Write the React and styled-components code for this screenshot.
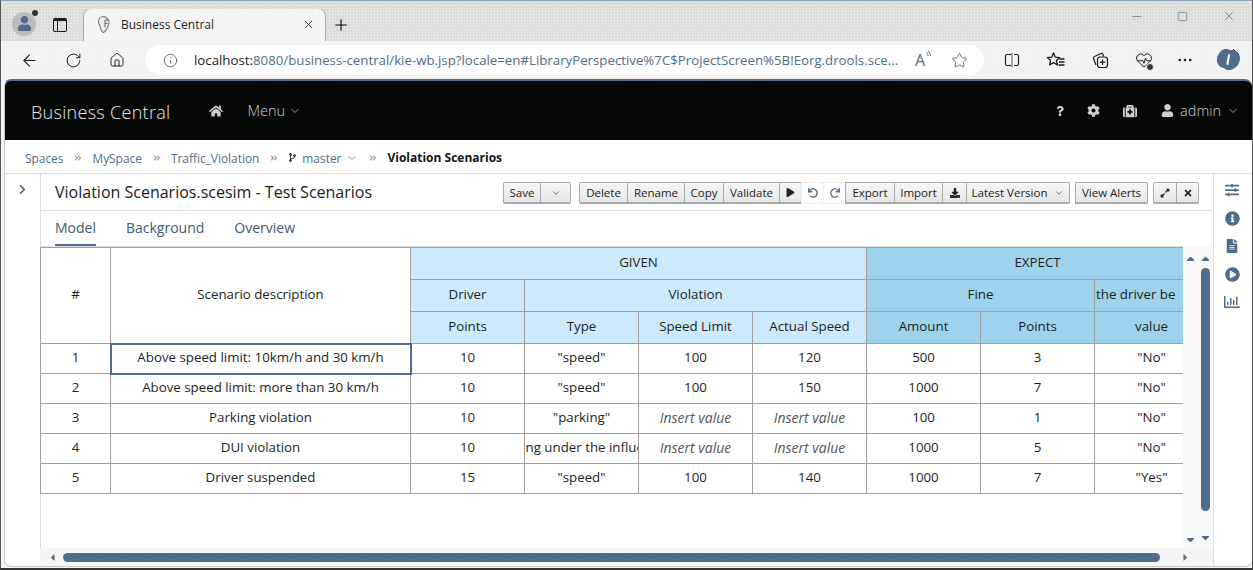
import React from 'react';
import styled, { createGlobalStyle } from 'styled-components';
import { ArrowLeft, RotateCw, Home, Info, Star, Plus, X, Minus, Square, MoreHorizontal, HeartPulse, ChevronDown } from 'lucide-react';
import {
  FaHome, FaQuestion, FaCog, FaMedkit, FaUser, FaChevronRight, FaCodeBranch, FaAngleDoubleRight,
  FaSlidersH, FaInfoCircle, FaFileAlt, FaPlayCircle, FaRegChartBar, FaPlay, FaUndo, FaRedo,
  FaDownload, FaExpandAlt, FaTimes, FaCaretUp, FaCaretDown, FaCaretLeft, FaCaretRight,
} from 'react-icons/fa';

const GlobalStyle = createGlobalStyle`
  html, body { margin: 0; padding: 0; background: #f3f3f3; }
  * { box-sizing: border-box; }
`;

const dither = `radial-gradient(rgba(255,255,255,.55) .6px, transparent .7px)`;

const Frame = styled.div`
  width: 1253px;
  height: 570px;
  overflow: hidden;
  display: flex;
  flex-direction: column;
  font-family: "Open Sans", sans-serif;
  background: #f4f4f4;
  border-top: 1px solid #8fa3b5;
  border-left: 1px solid #555;
  border-right: 1px solid #555;
  border-bottom: 2px solid #333;
`;

const TabStrip = styled.div`
  height: 40px;
  flex: none;
  display: flex;
  align-items: flex-end;
  background-color: #dcdcdb;
  background-image: ${dither};
  background-size: 3px 3px;
`;

const Profile = styled.div`
  width: 24px;
  height: 24px;
  margin-left: 11px;
  margin-right: 5px;
  position: relative;
  display: flex;
  align-items: center;
  justify-content: center;
  color: #4f6d8a;
  align-self: center;
  border-radius: 50%;
  background: #bcbcbc;
  margin-top: 5px;
`;

const ProfileDot = styled.span`
  position: absolute;
  top: -2px;
  right: -2px;
  width: 6px;
  height: 6px;
  border-radius: 50%;
  background: #333;
`;

const TabAction = styled.div`
  width: 34px;
  height: 100%;
  margin-left: 2px;
  margin-right: 7px;
  padding-top: 8px;
  display: flex;
  align-items: center;
  justify-content: center;
`;

const TabsIcon = styled.span`
  width: 14px;
  height: 14px;
  border: 1.5px solid #1c1c1c;
  border-radius: 2px;
  border-top-width: 3px;
  position: relative;
  &::after {
    content: '';
    position: absolute;
    left: 3px;
    top: 0;
    bottom: 0;
    border-left: 1.5px solid #1c1c1c;
  }
`;

const Tab = styled.div`
  width: 241px;
  height: 32px;
  background: #f4f4f4;
  border-radius: 7px 7px 0 0;
  display: flex;
  align-items: center;
  padding: 0 10px 2px 13px;
  font-size: 12px;
  color: #1c1c1c;
  box-shadow: -1px 0 0 #a8a8a8, 1px 0 0 #a8a8a8;
`;

const TabTitle = styled.span`
  flex: 1;
  margin-left: 9px;
`;

const NewTab = styled.div`
  margin-left: 7px;
  height: 100%;
  padding-top: 8px;
  display: flex;
  align-items: center;
`;

const WindowControls = styled.div`
  margin-left: auto;
  height: 100%;
  display: flex;
  align-items: center;
  gap: 34px;
  padding-right: 16px;
  color: #4f6d8a;
  padding-bottom: 10px;
`;

const NavBar = styled.div`
  height: 38px;
  flex: none;
  display: flex;
  align-items: center;
  padding-left: 19px;
  background-color: #f2f2f2;
  background-image: ${dither};
  background-size: 3px 3px;
`;

const NavIcon = styled.div`
  width: ${(p) => p.$w}px;
  flex: none;
  display: flex;
  align-items: center;
  color: #1c1c1c;
`;

const Address = styled.div`
  width: 839px;
  height: 30px;
  border-radius: 15px;
  background: #fff;
  display: flex;
  align-items: center;
  padding: 0 16px 0 18px;
  font-size: 13.25px;
  color: #4f6d8a;
  flex: none;
`;

const Host = styled.span`
  color: #1c1c1c;
`;

const Url = styled.span`
  margin-left: 16px;
  flex: 1;
  white-space: nowrap;
`;

const ReadAloud = styled.span`
  display: flex;
  align-items: flex-start;
  font-size: 16px;
  line-height: 18px;
  margin-right: 20px;
  color: #4f6d8a;
`;

const NavTools = styled.div`
  display: flex;
  align-items: center;
  margin-left: 6px;
  color: #1c1c1c;
`;

const NavTool = styled.div`
  width: ${(p) => p.$w || 44}px;
  display: flex;
  justify-content: center;
  position: relative;
`;

const HealthBadge = styled.span`
  position: absolute;
  right: 12px;
  bottom: -2px;
  width: 8px;
  height: 8px;
  border-radius: 50%;
  background: #333;
  border: 1px solid #f2f2f2;
`;

const Page = styled.div`
  flex: 1;
  min-height: 0;
  margin: 0 0 1px 3px;
  border-top: 2px solid #4f6d8a;
  border-radius: 7px;
  border-left: 1px solid #c9c9c9;
  border-bottom: 1px solid #c9c9c9;
  background: #fff;
  display: flex;
  flex-direction: column;
  overflow: hidden;
`;

const Header = styled.header`
  height: 59px;
  flex: none;
  background: #060808;
  color: #d8d8d8;
  display: flex;
  align-items: center;
  padding: 0 16px 0 26px;
`;

const Brand = styled.div`
  flex: none;
  white-space: nowrap;
  font-size: 18px;
  font-weight: 300;
  color: #e9e9e9;
  letter-spacing: .3px;
  margin-right: 39px;
  padding-top: 3px;
`;

const HeaderItem = styled.div`
  flex: none;
  display: flex;
  align-items: center;
  gap: ${(p) => p.$gap || 4}px;
  font-size: 14.5px;
  font-weight: 300;
  margin-left: ${(p) => p.$ml || 0}px;
  color: #cfcfcf;
`;

const Crumbs = styled.nav`
  height: 34px;
  flex: none;
  display: flex;
  align-items: center;
  padding: 2px 0 0 20px;
  font-size: 11.9px;
  color: #4f6d8a;
  border-bottom: 1px solid #dedede;
`;

const Crumb = styled.span`
  display: flex;
  align-items: center;
  gap: ${(p) => p.$gap || 0}px;
`;

const Sep = styled.span`
  display: flex;
  color: #a3a3a3;
  margin: 0 10px 0 11px;
`;

const Current = styled.span`
  font-weight: 700;
  font-size: 12px;
  color: #141414;
`;

const Main = styled.main`
  flex: 1;
  min-height: 0;
  display: flex;
`;

const LeftRail = styled.aside`
  width: 36px;
  flex: none;
  display: flex;
  justify-content: center;
  padding: 10px 1px 0 0;
  color: #4f6d8a;
  border-right: 1px solid #dedede;
`;

const Center = styled.section`
  width: 1172px;
  flex: none;
  display: flex;
  flex-direction: column;
`;

const TitleBar = styled.div`
  height: 37px;
  flex: none;
  display: flex;
  align-items: center;
  padding-left: 14px;
  border-bottom: 1px solid #dedede;
`;

const Title = styled.h1`
  margin: 0;
  font-size: 16px;
  font-weight: 400;
  color: #1a1a1a;
  flex: 1;
  white-space: nowrap;
`;

const Toolbar = styled.div`
  display: flex;
  align-items: center;
  margin-right: 14px;
  padding-top: 2px;
`;

const BtnGroup = styled.div`
  display: flex;
  margin-left: ${(p) => p.$ml || 0}px;
`;

const Btn = styled.div`
  width: ${(p) => p.$w}px;
  height: 22px;
  display: flex;
  align-items: center;
  justify-content: center;
  font-size: 11.5px;
  white-space: nowrap;
  gap: 7px;
  background: ${(p) => (p.$flat ? '#fff' : 'linear-gradient(#f6f6f6, #e6e6e6)')};
  border: 1px solid ${(p) => (p.$flat ? '#e4e4e4' : '#a9a9a9')};
  border-style: ${(p) => (p.$flat ? 'dotted' : 'solid')};
  border-bottom-width: ${(p) => (p.$flat ? 1 : 2)}px;
  margin-left: -1px;
  color: ${(p) => (p.$flat ? '#4f6d8a' : '#222')};
  &:first-child { border-radius: 2px 0 0 2px; }
  &:last-child { border-radius: 0 2px 2px 0; }
`;

const TabsRow = styled.div`
  height: 35px;
  flex: none;
  display: flex;
  padding-left: 14px;
  gap: 30px;
  font-size: 14px;
  color: #3f5a75;
`;

const TabLink = styled.div`
  height: 35px;
  display: flex;
  align-items: center;
  border-bottom: 2px solid ${(p) => (p.$active ? '#4f6d8a' : 'transparent')};
`;

const Body = styled.div`
  flex: 1;
  min-height: 0;
  margin-left: -1px;
  display: grid;
  grid-template-columns: 1143px 30px;
  grid-template-rows: 1fr 18px;
`;

const TableClip = styled.div`
  overflow: hidden;
  border-top: 1px solid #e4e4e4;
`;

const Table = styled.table`
  table-layout: fixed;
  border-collapse: collapse;
  width: 1168px;
  font-size: 13.3px;
  color: #1e1e1e;
  text-align: center;
`;

const Th = styled.th`
  font-weight: 400;
  height: 32px;
  padding: 0 0 3px;
  border: 1px solid #a49c98;
  background: ${(p) => (p.$kind === 'given' ? '#cde9fd' : p.$kind === 'expect' ? '#9fd2ec' : '#fff')};
`;

const Td = styled.td`
  height: 30px;
  padding: 0 0 3px;
  border: 1px solid #a49c98;
  color: ${(p) => (p.$empty ? '#555' : '#1e1e1e')};
  font-style: ${(p) => (p.$empty ? 'italic' : 'normal')};
  font-size: ${(p) => (p.$empty ? '14px' : 'inherit')};
  outline: ${(p) => (p.$selected ? '2px solid #4f6d8a' : 'none')};
  outline-offset: -1px;
`;

// long values stay centred and lose both ends at the cell edge
const Clip = styled.div`
  display: flex;
  justify-content: ${(p) => (p.$start ? 'flex-start' : 'center')};
  padding-left: ${(p) => (p.$start ? 1 : 0)}px;
  overflow: hidden;
  white-space: nowrap;
`;

const VGutter = styled.div`
  display: flex;
  background-color: #f8f8f8;
  background-image: ${dither};
  background-size: 3px 3px;
`;

const VArrows = styled.div`
  width: 14px;
  display: flex;
  flex-direction: column;
  justify-content: space-between;
  align-items: center;
  color: #4f6d8a;
  padding: 6px 0 2px;
`;

const VTrack = styled.div`
  width: 13px;
  margin-left: 2px;
  display: flex;
  flex-direction: column;
  justify-content: space-between;
  align-items: center;
  color: #4f6d8a;
  padding: 6px 0 4px;
`;

const VThumb = styled.div`
  width: 9px;
  height: 243px;
  margin-top: 3px;
  margin-bottom: auto;
  border-radius: 5px;
  background: #4f6d8a;
`;

const HBar = styled.div`
  grid-column: 1 / 3;
  display: flex;
  align-items: center;
  background-color: #f4f4f4;
  background-image: ${dither};
  background-size: 3px 3px;
  color: #4f6d8a;
  padding-left: 7px;
  height: 18px;
`;

const HThumb = styled.div`
  width: 1097px;
  height: 9px;
  margin-left: 5px;
  border-radius: 5px;
  background: #4f6d8a;
`;

const HEnd = styled.div`
  margin-left: auto;
  margin-right: 22px;
  display: flex;
`;

const RightRail = styled.aside`
  flex: 1;
  border-left: 1px solid #dedede;
  display: flex;
  flex-direction: column;
  align-items: center;
  padding: 2px 2px 0 0;
  color: #4f6d8a;
`;

const RailSlot = styled.div`
  height: 28px;
  display: flex;
  align-items: center;
`;

const columns = [70, 300, 114, 114, 114, 114, 114, 114, 114];

const rows = [
  ['1', 'Above speed limit: 10km/h and 30 km/h', '10', '"speed"', '100', '120', '500', '3', '"No"'],
  ['2', 'Above speed limit: more than 30 km/h', '10', '"speed"', '100', '150', '1000', '7', '"No"'],
  ['3', 'Parking violation', '10', '"parking"', null, null, '100', '1', '"No"'],
  ['4', 'DUI violation', '10', 'Driving under the influence', null, null, '1000', '5', '"No"'],
  ['5', 'Driver suspended', '15', '"speed"', '100', '140', '1000', '7', '"Yes"'],
];

const FavIcon = () => (
  <svg width="20" height="18" viewBox="0 0 20 18" fill="none" stroke="#1c1c1c" strokeWidth="1.3">
    <path d="M7.5 2l1.8 4.2 4.4.4-3.3 3 1 4.4-3.9-2.4-3.9 2.4 1-4.4-3.3-3 4.4-.4z" strokeLinejoin="round" />
    <path d="M13.5 8h5M13 11h5.5M12.5 14h6" />
  </svg>
);

const SplitIcon = () => (
  <svg width="16" height="16" viewBox="0 0 16 16" fill="none" stroke="#1c1c1c" strokeWidth="1.2">
    <path d="M7 2.5H3a1.5 1.5 0 0 0-1.5 1.5v8A1.5 1.5 0 0 0 3 13.5h4M10 2.5h3A1.5 1.5 0 0 1 14.500 4v8a1.500 1.500 0 0 1-1.500 1.500h-3" />
    <path d="M8 1v14" stroke="#4f6d8a" />
  </svg>
);

const CollectionIcon = () => (
  <svg width="18" height="18" viewBox="0 0 18 18" fill="none" stroke="#1c1c1c" strokeWidth="1.2">
    <path d="M5 14L2.500 7.500a1.500 1.500 0 0 1 1-2L10 2.500a1.500 1.500 0 0 1 2 1l.5 2" />
    <rect x="6.500" y="6" width="10" height="10.500" rx="2.500" />
    <path d="M11.500 8.500v5.500M8.800 11.200h5.500" />
  </svg>
);

const CopilotIcon = () => (
  <svg width="25" height="24" viewBox="0 0 25 24">
    <path d="M5 3c3-3 7-2 9-1l3 0c4 0 7 4 7 8 0 5-3 9-7 11-3 2-8 1-9-1-4 0-8-5-7-9 0-3 2-6 4-8z" fill="#4f6d8a" />
    <path d="M13 7l-1.500 9" stroke="#fff" strokeWidth="2" strokeLinecap="round" />
    <path d="M17 1l2 2" stroke="#222" strokeWidth="1" />
  </svg>
);

const BrowserLogo = () => (
  <svg width="15" height="19" viewBox="0 0 15 19" fill="none" stroke="#777" strokeWidth="1.1">
    <path d="M7 1.500c-3 0-5.500 2-5.500 5 0 2 .8 3 1.500 4.500.5 2 1 5.500 3.500 6.500 2-1 3.500-4 5-7 1-2 1.500-7-4.500-9z" fill="#eee" />
    <path d="M8 5v7M8 5h3M8 8.500h2.500" stroke="#4f6d8a" />
  </svg>
);

const SoundArcs = () => (
  <svg width="6" height="9" viewBox="0 0 6 9" fill="none" stroke="#4f6d8a" strokeWidth="1">
    <path d="M1 1c1 1 2 2 2 4M3 0c1.500 1 2.500 3 2.500 5" />
  </svg>
);

const BranchIcon = () => <FaCodeBranch size={9} color="#222" />;

const Caret = ({ size = 12 }) => <ChevronDown size={size} strokeWidth={1.5} />;

const App = () => (
  <>
    <GlobalStyle />
    <Frame>
      <TabStrip>
        <Profile>
          <FaUser size={15} />
          <ProfileDot />
        </Profile>
        <TabAction>
          <TabsIcon />
        </TabAction>
        <Tab>
          <BrowserLogo />
          <TabTitle>Business Central</TabTitle>
          <X size={13} strokeWidth={1.5} />
        </Tab>
        <NewTab>
          <Plus size={18} strokeWidth={1.4} />
        </NewTab>
        <WindowControls>
          <Minus size={13} strokeWidth={1.3} />
          <Square size={11} strokeWidth={1.3} />
          <X size={14} strokeWidth={1.2} />
        </WindowControls>
      </TabStrip>

      <NavBar>
        <NavIcon $w={45}><ArrowLeft size={19} strokeWidth={1.4} /></NavIcon>
        <NavIcon $w={44}><RotateCw size={17} strokeWidth={1.4} /></NavIcon>
        <NavIcon $w={36}><Home size={16} strokeWidth={1.4} /></NavIcon>
        <Address>
          <Info size={15} strokeWidth={1.3} color="#555" />
          <Url>
            <Host>localhost:</Host>8080/business-central/kie-wb.jsp?locale=en#LibraryPerspective%7C$ProjectScreen%5B!Eorg.drools.sce...
          </Url>
          <ReadAloud>A<SoundArcs /></ReadAloud>
          <Star size={17} strokeWidth={1.3} color="#4f6d8a" />
        </Address>
        <NavTools>
          <NavTool><SplitIcon /></NavTool>
          <NavTool><FavIcon /></NavTool>
          <NavTool><CollectionIcon /></NavTool>
          <NavTool><HeartPulse size={18} strokeWidth={1.3} /><HealthBadge /></NavTool>
          <NavTool $w={38}><MoreHorizontal size={18} strokeWidth={1.5} /></NavTool>
          <NavTool $w={48}><CopilotIcon /></NavTool>
        </NavTools>
      </NavBar>

      <Page>
        <Header>
          <Brand>Business Central</Brand>
          <HeaderItem><FaHome size={14} /></HeaderItem>
          <HeaderItem $ml={24}>Menu <Caret /></HeaderItem>
          <HeaderItem $ml={754}><FaQuestion size={10} /></HeaderItem>
          <HeaderItem $ml={22}><FaCog size={13} /></HeaderItem>
          <HeaderItem $ml={23}><FaMedkit size={14} /></HeaderItem>
          <HeaderItem $ml={24} $gap={6}><FaUser size={13} />admin <Caret /></HeaderItem>
        </Header>

        <Crumbs>
          <Crumb>Spaces</Crumb>
          <Sep><FaAngleDoubleRight size={8} /></Sep>
          <Crumb>MySpace</Crumb>
          <Sep><FaAngleDoubleRight size={8} /></Sep>
          <Crumb>Traffic_Violation</Crumb>
          <Sep><FaAngleDoubleRight size={8} /></Sep>
          <Crumb $gap={5}><BranchIcon /> master <Caret /></Crumb>
          <Sep><FaAngleDoubleRight size={8} /></Sep>
          <Current>Violation Scenarios</Current>
        </Crumbs>

        <Main>
          <LeftRail><FaChevronRight size={11} /></LeftRail>
          <Center>
            <TitleBar>
              <Title>Violation Scenarios.scesim - Test Scenarios</Title>
              <Toolbar>
                <BtnGroup>
                  <Btn $w={38}>Save</Btn>
                  <Btn $w={31}><Caret size={10} /></Btn>
                </BtnGroup>
                <BtnGroup $ml={9}>
                  <Btn $w={49}>Delete</Btn>
                  <Btn $w={58}>Rename</Btn>
                  <Btn $w={40}>Copy</Btn>
                  <Btn $w={57}>Validate</Btn>
                  <Btn $w={23}><FaPlay size={9} /></Btn>
                  <Btn $w={23} $flat><FaUndo size={10} /></Btn>
                  <Btn $w={23} $flat><FaRedo size={10} /></Btn>
                  <Btn $w={50}>Export</Btn>
                  <Btn $w={49}>Import</Btn>
                  <Btn $w={25}><FaDownload size={10} /></Btn>
                  <Btn $w={104}>Latest Version <Caret size={10} /></Btn>
                </BtnGroup>
                <BtnGroup $ml={6}>
                  <Btn $w={73}>View Alerts</Btn>
                </BtnGroup>
                <BtnGroup $ml={6}>
                  <Btn $w={24}><FaExpandAlt size={10} /></Btn>
                  <Btn $w={23}><FaTimes size={10} /></Btn>
                </BtnGroup>
              </Toolbar>
            </TitleBar>

            <TabsRow>
              <TabLink $active>Model</TabLink>
              <TabLink>Background</TabLink>
              <TabLink>Overview</TabLink>
            </TabsRow>

            <Body>
              <TableClip>
                <Table>
                  <colgroup>
                    {columns.map((w, i) => <col key={i} style={{ width: w }} />)}
                  </colgroup>
                  <thead>
                    <tr>
                      <Th rowSpan={3}>#</Th>
                      <Th rowSpan={3}>Scenario description</Th>
                      <Th colSpan={4} $kind="given">GIVEN</Th>
                      <Th colSpan={3} $kind="expect">EXPECT</Th>
                    </tr>
                    <tr>
                      <Th $kind="given">Driver</Th>
                      <Th colSpan={3} $kind="given">Violation</Th>
                      <Th colSpan={2} $kind="expect">Fine</Th>
                      <Th $kind="expect"><Clip $start>the driver be</Clip></Th>
                    </tr>
                    <tr>
                      <Th $kind="given">Points</Th>
                      <Th $kind="given">Type</Th>
                      <Th $kind="given">Speed Limit</Th>
                      <Th $kind="given">Actual Speed</Th>
                      <Th $kind="expect">Amount</Th>
                      <Th $kind="expect">Points</Th>
                      <Th $kind="expect">value</Th>
                    </tr>
                  </thead>
                  <tbody>
                    {rows.map((row, r) => (
                      <tr key={r}>
                        {row.map((cell, c) => (
                          <Td key={c} $empty={cell === null} $selected={r === 0 && c === 1}>
                            <Clip>{cell === null ? 'Insert value' : cell}</Clip>
                          </Td>
                        ))}
                      </tr>
                    ))}
                  </tbody>
                </Table>
              </TableClip>
              <VGutter>
                <VArrows>
                  <FaCaretUp size={13} />
                  <FaCaretDown size={13} />
                </VArrows>
                <VTrack>
                  <FaCaretUp size={13} />
                  <VThumb />
                  <FaCaretDown size={13} />
                </VTrack>
              </VGutter>
              <HBar>
                <FaCaretLeft size={11} />
                <HThumb />
                <HEnd><FaCaretRight size={11} /></HEnd>
              </HBar>
            </Body>
          </Center>
          <RightRail>
            <RailSlot><FaSlidersH size={14} /></RailSlot>
            <RailSlot><FaInfoCircle size={15} /></RailSlot>
            <RailSlot><FaFileAlt size={14} /></RailSlot>
            <RailSlot><FaPlayCircle size={15} /></RailSlot>
            <RailSlot><FaRegChartBar size={16} /></RailSlot>
          </RightRail>
        </Main>
      </Page>
    </Frame>
  </>
);

export default App;
